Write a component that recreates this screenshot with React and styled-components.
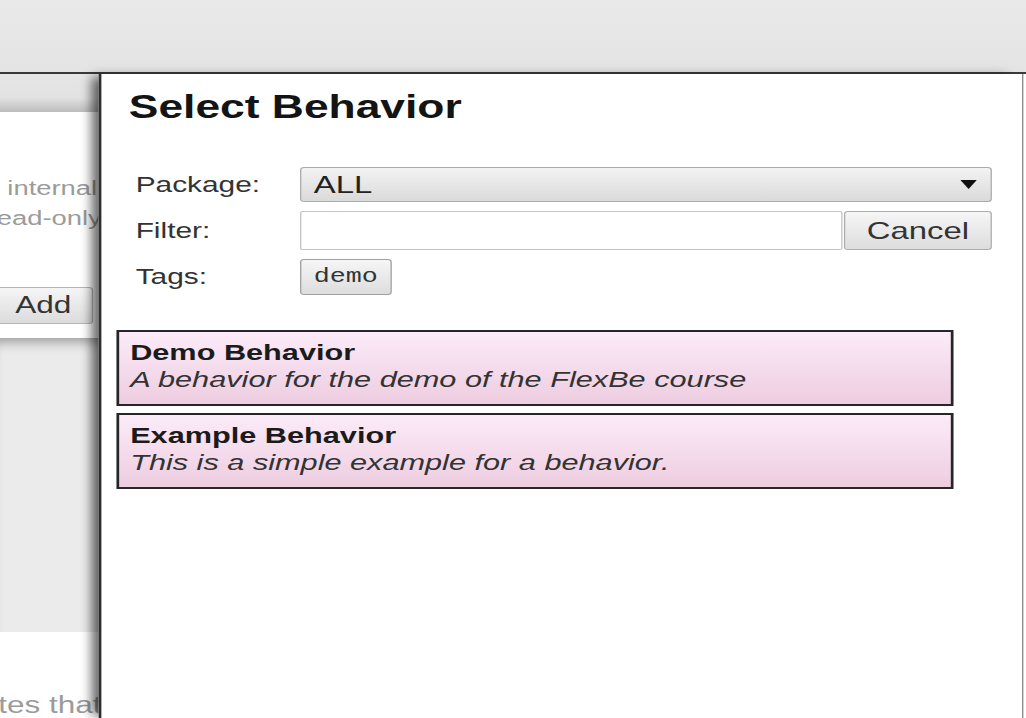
import React from "react";
import styled, { createGlobalStyle } from "styled-components";

const GlobalStyle = createGlobalStyle`
  html, body {
    margin: 0;
    padding: 0;
    background: #ffffff;
    overflow: hidden;
  }
  #root {
    width: 1026px;
    height: 718px;
    overflow: hidden;
  }
`;

/* The reference capture is stretched horizontally; the stage reproduces that stretch. */
const Stage = styled.div`
  width: 749px;
  height: 718px;
  display: flex;
  flex-direction: column;
  transform: scaleX(1.37);
  transform-origin: 0 0;
  font-family: "Liberation Sans", Arial, sans-serif;
  color: #222;
`;

const TopBar = styled.div`
  flex: none;
  height: 72px;
  background: linear-gradient(#e9e9e9, #e4e4e4);
  border-bottom: 2px solid #3a3a3a;
`;

const Main = styled.div`
  flex: 1;
  min-height: 0;
  display: flex;
`;

const LeftColumn = styled.div`
  flex: none;
  width: 72px;
  overflow: hidden;
  display: flex;
  flex-direction: column;
`;

const LeftHeader = styled.div`
  flex: none;
  height: 38px;
  background: linear-gradient(#e6e6e6 0%, #e2e2e2 62%, #bdbdbd 100%);
`;

const LeftSection = styled.div`
  flex: none;
  background: #ffffff;
  padding: 61px 0 14px;
  display: flex;
  flex-direction: column;
`;

const MutedLines = styled.div`
  margin-left: ${(p) => p.$shift}px;
  font-size: ${(p) => p.$size}px;
  line-height: 30px;
  white-space: nowrap;
  color: #9b9b9b;
`;

const AddButton = styled.button`
  align-self: flex-end;
  flex: none;
  margin: 54px 4px 0 0;
  height: 37px;
  padding: 0 15px;
  box-sizing: border-box;
  font-family: inherit;
  font-size: 23px;
  color: #333;
  background: linear-gradient(#f5f5f5, #dcdcdc);
  border: 1px solid #b5b5b5;
  border-radius: 3px;
`;

const GrayWell = styled.div`
  flex: none;
  height: 294px;
  background: #ebebeb;
  box-shadow: inset 0 10px 10px -6px rgba(0, 0, 0, 0.35);
`;

const LeftFooter = styled.div`
  flex: 1;
  background: #ffffff;
  padding-top: 58px;
`;

const Panel = styled.section`
  flex: 1;
  position: relative;
  z-index: 1;
  margin-right: 2.5px;
  background: #ffffff;
  border-left: 2px solid #2d2d2d;
  border-right: 1.5px solid #8d8d8d;
  box-shadow: -8px 0 9px -3px rgba(0, 0, 0, 0.6);
  padding-top: 15px;
  display: flex;
  flex-direction: column;
`;

const Title = styled.h1`
  margin: 0 0 0 20px;
  font-size: 32.4px;
  line-height: 36px;
  font-weight: bold;
  color: #141414;
`;

const Form = styled.div`
  display: grid;
  grid-template-columns: 120px 1fr;
  row-gap: 9px;
  align-items: center;
  margin-top: 42px;
  padding: 0 21.5px 0 25px;
`;

const Label = styled.div`
  font-size: 21.8px;
  line-height: 24px;
  color: #333;
`;

const SelectBox = styled.div`
  height: 35px;
  box-sizing: border-box;
  display: flex;
  align-items: center;
  justify-content: space-between;
  padding: 0 10px 0 9px;
  font-size: 24px;
  color: #222;
  background: linear-gradient(#f3f3f3, #dadada);
  border: 1px solid #ababab;
  border-radius: 3px;
`;

const FilterRow = styled.div`
  display: flex;
`;

const FilterInput = styled.input`
  flex: 1;
  min-width: 0;
  height: 39px;
  margin: 0;
  box-sizing: border-box;
  background: #ffffff;
  border: 1px solid #c6c6c6;
  border-radius: 2px;
  font-family: inherit;
  font-size: 21px;
  outline: none;
`;

const GradientButton = styled.button`
  flex: none;
  box-sizing: border-box;
  margin: 0 0 0 ${(p) => p.$gap || 0}px;
  font-family: inherit;
  color: #333;
  background: linear-gradient(#f6f6f6, #dddddd);
  border: 1px solid #adadad;
  border-radius: 3px;
`;

const CancelButton = styled(GradientButton)`
  width: 108px;
  height: 39px;
  font-size: 24px;
`;

const TagButton = styled(GradientButton)`
  justify-self: start;
  height: 36px;
  padding: 0 9px;
  font-family: "Liberation Mono", "DejaVu Sans Mono", monospace;
  font-size: 19.5px;
  border-color: #a0a0a0;
`;

const List = styled.div`
  display: flex;
  flex-direction: column;
  gap: 7px;
  margin-top: 35px;
  padding-left: 11px;
`;

const Card = styled.div`
  width: 611px;
  box-sizing: border-box;
  padding: 7px 8px 11px;
  border: 2px solid #262626;
  background: linear-gradient(#fcebf8, #edcde0);
  font-size: 22.4px;
  line-height: 27px;
`;

const CardTitle = styled.div`
  font-weight: bold;
  color: #1b1b1b;
`;

const CardDesc = styled.div`
  font-style: italic;
  color: #333;
`;

const Arrow = () => (
  <svg width="12" height="9" viewBox="0 0 12 9" aria-hidden="true">
    <polygon points="0,0 12,0 6,9" fill="#111" />
  </svg>
);

const behaviors = [
  { name: "Demo Behavior", description: "A behavior for the demo of the FlexBe course" },
  { name: "Example Behavior", description: "This is a simple example for a behavior." },
];

export default function App() {
  return (
    <>
      <GlobalStyle />
      <Stage>
        <TopBar />
        <Main>
          <LeftColumn>
            <LeftHeader />
            <LeftSection>
              <MutedLines $shift={-48} $size={20}>
                <div>items internal</div>
                <div>and read-only</div>
              </MutedLines>
              <AddButton>Add</AddButton>
            </LeftSection>
            <GrayWell />
            <LeftFooter>
              <MutedLines $shift={-32} $size={23}>
                <div>states that</div>
              </MutedLines>
            </LeftFooter>
          </LeftColumn>

          <Panel>
            <Title>Select Behavior</Title>
            <Form>
              <Label>Package:</Label>
              <SelectBox>
                <span>ALL</span>
                <Arrow />
              </SelectBox>
              <Label>Filter:</Label>
              <FilterRow>
                <FilterInput type="text" />
                <CancelButton $gap={1}>Cancel</CancelButton>
              </FilterRow>
              <Label>Tags:</Label>
              <TagButton>demo</TagButton>
            </Form>
            <List>
              {behaviors.map((b) => (
                <Card key={b.name}>
                  <CardTitle>{b.name}</CardTitle>
                  <CardDesc>{b.description}</CardDesc>
                </Card>
              ))}
            </List>
          </Panel>
        </Main>
      </Stage>
    </>
  );
}
